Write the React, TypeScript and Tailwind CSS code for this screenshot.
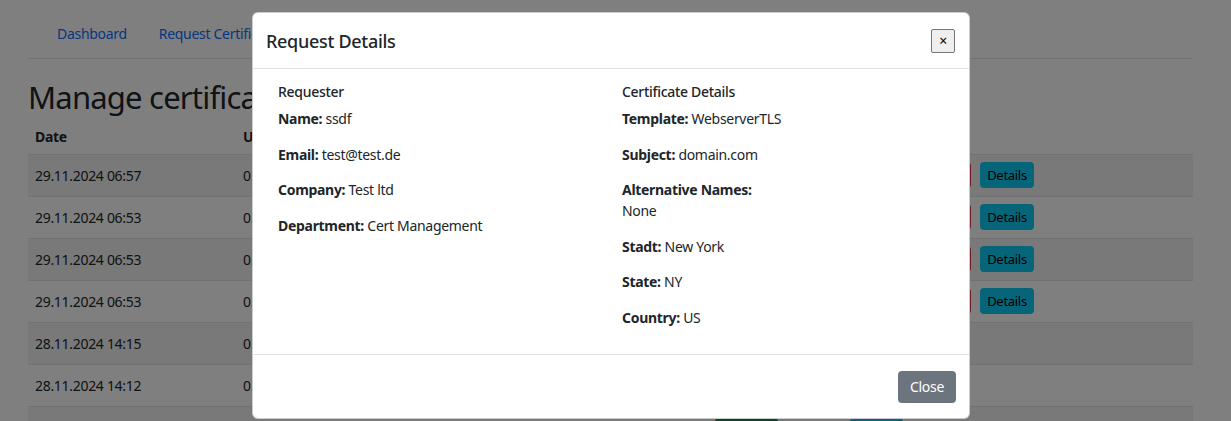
import React from "react";

const font = { fontFamily: '"Noto Sans", "Open Sans", sans-serif' };

const rows = [
  { date: "29.11.2024 06:57", details: true, striped: true },
  { date: "29.11.2024 06:53", details: true, striped: false },
  { date: "29.11.2024 06:53", details: true, striped: true },
  { date: "29.11.2024 06:53", details: true, striped: false },
  { date: "28.11.2024 14:15", details: false, striped: true },
  { date: "28.11.2024 14:12", details: false, striped: false },
  { date: "28.11.2024 13:48", details: false, striped: true, last: true },
];

function Field({ label, value, block }: { label: string; value: string; block?: boolean }) {
  return (
    <p className="mb-[14.5px] leading-[21px]">
      <span className="font-bold">{label}</span>
      {block ? <br /> : " "}
      {value}
    </p>
  );
}

export default function App() {
  return (
    <div className="relative w-[1231px] h-[421px] overflow-hidden bg-white text-[#212529] tracking-[-0.3px]" style={font}>
      {/* Background page */}
      <div className="ml-[28px] w-[1165px]">
        <div className="h-[59px] pt-[22px] border-b border-[#dee2e6] flex pl-[13px] text-[14px] text-[#0d6efd]">
          <span className="px-4 leading-[24px]">Dashboard</span>
          <span className="px-4 leading-[24px]">Request Certificate</span>
        </div>
        <h2 className="mt-[19px] text-[31px] leading-[38px] font-normal tracking-[-0.8px]">Manage certificates</h2>
        <div className="mt-[6px] text-[14px]">
          <div className="h-[33px] flex items-start pt-[4px] border-b border-[#dee2e6] font-bold">
            <div className="w-[208px] px-[7px]">Date</div>
            <div className="px-[7px]">User</div>
          </div>
          {rows.map((r, i) => (
            <div
              key={i}
              className={`h-[42px] flex items-center border-b border-[#dee2e6] relative ${r.striped ? "bg-[#f2f2f2]" : "bg-white"}`}
            >
              <div className="w-[208px] px-[7px]">{r.date}</div>
              <div className="w-[90px] px-[7px]">0.2</div>
              <div className="px-[7px]">WebserverTLS</div>
              {r.details && (
                <div className="absolute left-[887px] top-[7px] flex gap-[9px]">
                  <span className="h-[26px] w-[56px] rounded-[4px] bg-[#dc3545] text-white text-[14px] leading-[26px] text-center">Deny</span>
                  <span className="h-[26px] w-[54px] rounded-[4px] bg-[#0dcaf0] text-black text-[13px] leading-[26px] text-center">Details</span>
                </div>
              )}
              {r.last && (
                <div className="absolute left-[687px] top-[11px] flex">
                  <span className="h-[26px] w-[63px] rounded-[4px] bg-[#198754]" />
                  <span className="ml-[72px] h-[26px] w-[53px] rounded-[4px] bg-[#0dcaf0]" />
                </div>
              )}
            </div>
          ))}
        </div>
      </div>

      {/* Backdrop */}
      <div className="absolute inset-0 bg-black/50" />

      {/* Modal */}
      <div className="absolute left-[252px] top-[12px] w-[718px] h-[407px] bg-white rounded-[6px] border border-black/20 flex flex-col">
        <div className="h-[56px] flex items-center justify-between pl-[13px] pr-[14px] border-b border-[#dee2e6] shrink-0">
          <h5 className="text-[18px] font-medium leading-[24px] text-[#212529]">Request Details</h5>
          <button className="w-[24px] h-[24px] border border-[#767676] bg-[#efefef] text-[14px] leading-none flex items-center justify-center text-black rounded-[2px]">
            ×
          </button>
        </div>
        <div className="flex-1 flex pl-[25px] pt-[12px] text-[14px] text-[#212529]">
          <div className="w-[344px]">
            <h6 className="text-[14px] font-medium leading-[21px] mb-[6px]">Requester</h6>
            <Field label="Name:" value="ssdf" />
            <Field label="Email:" value="test@test.de" />
            <Field label="Company:" value="Test ltd" />
            <Field label="Department:" value="Cert Management" />
          </div>
          <div className="w-[330px]">
            <h6 className="text-[14px] font-medium leading-[21px] mb-[6px]">Certificate Details</h6>
            <Field label="Template:" value="WebserverTLS" />
            <Field label="Subject:" value="domain.com" />
            <Field label="Alternative Names:" value="None" block />
            <Field label="Stadt:" value="New York" />
            <Field label="State:" value="NY" />
            <Field label="Country:" value="US" />
          </div>
        </div>
        <div className="h-[64px] shrink-0 border-t border-[#dee2e6] flex items-center justify-end pr-[13px]">
          <button className="h-[32px] w-[58px] rounded-[4px] bg-[#6c757d] text-white text-[14px]">Close</button>
        </div>
      </div>
    </div>
  );
}
